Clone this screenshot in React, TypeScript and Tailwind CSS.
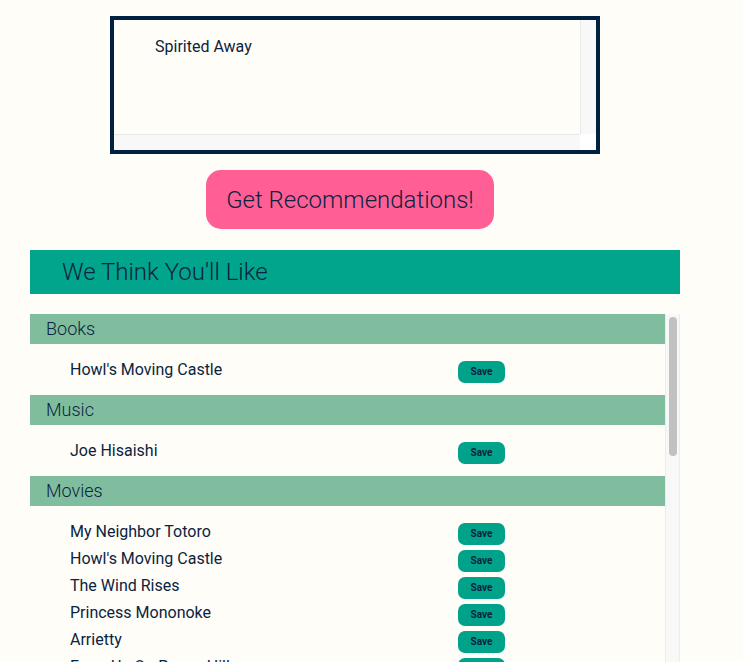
import React from 'react';

const navy = 'text-[#0b2340]';

interface Section {
  title: string;
  items: string[];
}

const sections: Section[] = [
  { title: 'Books', items: ["Howl's Moving Castle"] },
  { title: 'Music', items: ['Joe Hisaishi'] },
  {
    title: 'Movies',
    items: [
      'My Neighbor Totoro',
      "Howl's Moving Castle",
      'The Wind Rises',
      'Princess Mononoke',
      'Arrietty',
      'From Up On Poppy Hill',
    ],
  },
];

// Fake scrollbar track, drawn in flow beside the content
const VTrack: React.FC<{ thumb?: boolean }> = ({ thumb = false }) => (
  <div className="w-[15px] shrink-0 bg-[#f8f8f9] border-l border-r border-[#ececec] pt-[3px] flex justify-center">
    {thumb && <div className="w-[8px] h-[139px] rounded-full bg-[#c1c1c1]" />}
  </div>
);

const App: React.FC = () => {
  return (
    <div
      className={`w-[743px] h-[662px] overflow-hidden bg-[#fefdf8] ${navy}`}
      style={{ fontFamily: 'Roboto, "Liberation Sans", sans-serif' }}
    >
      {/* Selected titles box */}
      <div className="pt-[16px] pl-[110px]">
        <div className="w-[490px] h-[138px] border-[4px] border-[#002240] flex flex-col">
          <div className="flex flex-1 min-h-0">
            <div className="flex-1 pl-[41px] pt-[17px] text-[16px] leading-[20px]">Spirited Away</div>
            <div className="w-[16px] bg-[#f8f8f9] border-l border-[#e8e8e8]" />
          </div>
          <div className="flex h-[16px]">
            <div className="flex-1 bg-[#f8f8f9] border-t border-[#e8e8e8]" />
            <div className="w-[16px] bg-white" />
          </div>
        </div>
      </div>

      {/* Action */}
      <div className="w-[700px] flex justify-center pt-[16px]">
        <button className="w-[288px] h-[59px] rounded-[15px] bg-[#ff5f95] text-[24px] font-light text-[#0b2340]">
          Get Recommendations!
        </button>
      </div>

      {/* Results */}
      <div className="pl-[30px] pt-[21px]">
        <div className="w-[650px] h-[44px] bg-[#00a58b] flex items-center pl-[32px] text-[24px] font-light">
          We Think You'll Like
        </div>

        <div className="mt-[20px] w-[650px] flex h-[400px]">
          <div className="w-[635px]">
            {sections.map((section) => (
              <div key={section.title}>
                <div className="h-[30px] bg-[#7fbd9e] flex items-center pl-[16px] pb-[2px] text-[18px] font-light">
                  {section.title}
                </div>
                <ul className="pt-[14px] pb-[10px]">
                  {section.items.map((item) => (
                    <li key={item} className="h-[27px] flex items-center">
                      <span className="w-[428px] pl-[40px] mb-[4px] text-[16px] leading-[20px]">{item}</span>
                      <button className="w-[47px] h-[22px] rounded-[7px] bg-[#00a28a] text-[10px] font-bold text-[#0b2340]">
                        Save
                      </button>
                    </li>
                  ))}
                </ul>
              </div>
            ))}
          </div>
          <VTrack thumb />
        </div>
      </div>
    </div>
  );
};

export default App;
